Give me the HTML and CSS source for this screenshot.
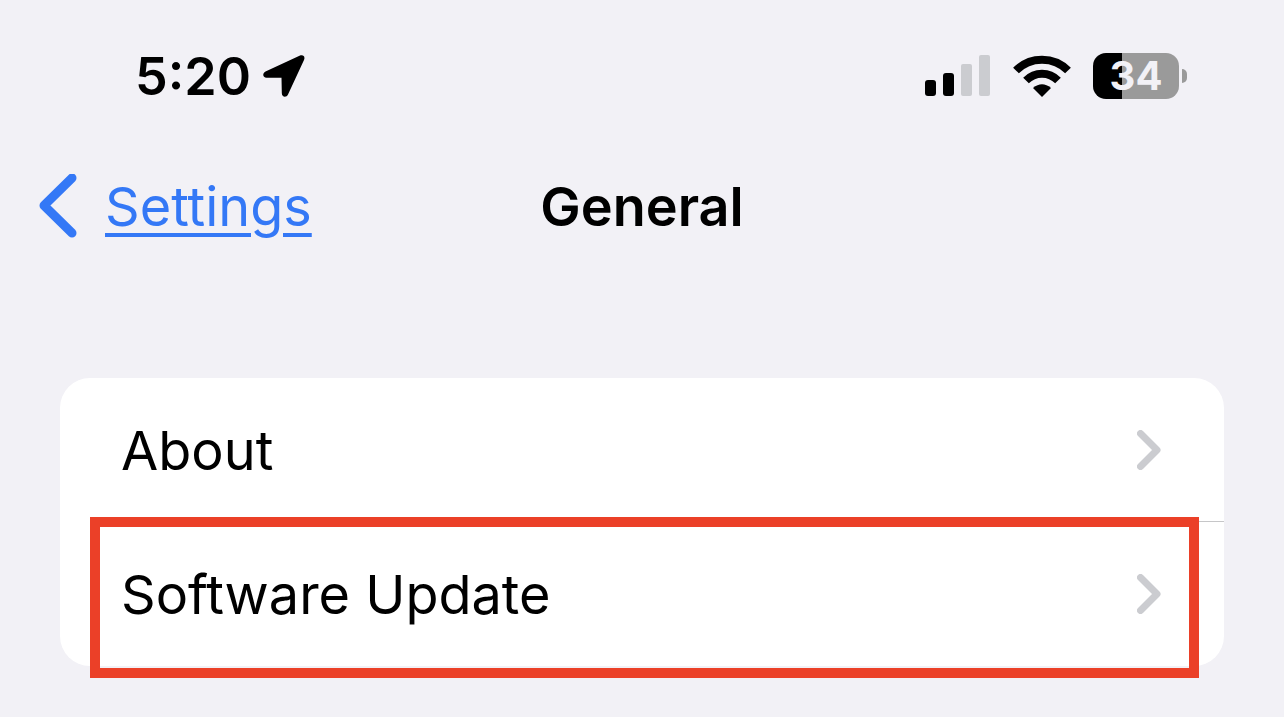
FILE: index.html
```html
<!DOCTYPE html>
<html lang="en">
<head>
    <meta charset="UTF-8">
    <meta name="viewport" content="width=device-width, initial-scale=1.0">
    <title>General</title>
    <link rel="stylesheet" href="styles.css">
</head>
<body>
    <div class="status-bar">
        <div class="status-left">
            <span class="time">5:20</span>
            <svg class="location" viewBox="0 0 42 42" aria-hidden="true">
                <path d="M36.500 0.800 L2.500 16.500 C-1 18.300 -0.200 22.800 3.500 22.800 L18.500 22.800 L18.800 38 C18.800 42.500 23.500 42.800 25 39.500 L41 5 C42.500 1.500 40 -0.800 36.500 0.800 Z"/>
            </svg>
        </div>
        <div class="status-right">
            <svg class="signal" viewBox="0 0 66 42" aria-hidden="true">
                <rect x="0" y="25" width="11" height="16" rx="3"/>
                <rect x="18" y="18" width="11" height="23" rx="3"/>
                <rect class="dim" x="36" y="9" width="11" height="32" rx="2"/>
                <rect class="dim" x="54" y="0" width="11" height="41" rx="2"/>
            </svg>
            <svg class="wifi" viewBox="0 0 58 42" aria-hidden="true">
                <path class="arc" d="M3 15.500 C17 1 41 1 55 15.500"/>
                <path class="arc" d="M13 25.500 C22 16.500 36 16.500 45 25.500"/>
                <path d="M29 42 L20 33 Q29 25.500 38 33 Z"/>
            </svg>
            <div class="battery">
                <span class="battery-level">34</span>
                <span class="battery-cap"></span>
            </div>
        </div>
    </div>

    <header class="nav-bar">
        <a href="#" class="back">
            <svg class="back-icon" viewBox="0 0 38 64" aria-hidden="true">
                <path d="M33 4 L5 31.500 L33 59"/>
            </svg>
            <span class="back-label">Settings</span>
        </a>
        <h1>General</h1>
    </header>

    <main class="list">
        <a href="#" class="row">
            <span>About</span>
            <svg class="chevron" viewBox="0 0 24 40" aria-hidden="true"><path d="M3.500 3.500 L20 20 L3.500 36.500"/></svg>
        </a>
        <a href="#" class="row">
            <span>Software Update</span>
            <svg class="chevron" viewBox="0 0 24 40" aria-hidden="true"><path d="M3.500 3.500 L20 20 L3.500 36.500"/></svg>
        </a>
        <div class="highlight"></div>
    </main>
</body>
</html>
```

FILE: styles.css
```css
* {
    box-sizing: border-box;
}
body {
    margin: 0;
    padding-bottom: 51px;
    font-family: Inter, "Liberation Sans", sans-serif;
    font-size: 54px;
    color: #000;
    background-color: #f2f1f6;
}
.status-bar {
    display: flex;
    justify-content: space-between;
    align-items: center;
    height: 152px;
    padding: 0 97px 0 135px;
}
.status-left, .status-right {
    display: flex;
    align-items: center;
}
.status-left {
    gap: 12px;
}
.status-right {
    gap: 22px;
}
.time {
    font-size: 52px;
    font-weight: 600;
}
.location {
    width: 42px;
    height: 42px;
}
.signal {
    width: 66px;
    height: 42px;
}
.signal .dim {
    fill: #cbccd0;
}
.wifi {
    width: 58px;
    height: 42px;
}
.wifi .arc {
    fill: none;
    stroke: #000;
    stroke-width: 8px;
}
.battery {
    display: flex;
    align-items: center;
    gap: 3px;
}
.battery-level {
    width: 86px;
    height: 46px;
    border-radius: 13px;
    background: linear-gradient(to right, #000 34%, #9a9a9a 34%);
    color: #f2f1f6;
    font-size: 40px;
    font-weight: 700;
    line-height: 45px;
    text-align: center;
}
.battery-cap {
    width: 5px;
    height: 14px;
    border-radius: 0 5px 5px 0;
    background-color: #9a9a9a;
}
.nav-bar {
    display: grid;
    grid-template-columns: 1fr auto 1fr;
    align-items: center;
    height: 108px;
    padding: 0 39px;
}
.nav-bar h1 {
    margin: 0;
    font-size: 54px;
    font-weight: 600;
}
.back {
    display: flex;
    align-items: center;
    gap: 28px;
    color: #3478f6;
    text-decoration: none;
}
.back-icon {
    width: 38px;
    height: 64px;
    fill: none;
    stroke: #3478f6;
    stroke-width: 9px;
    stroke-linecap: round;
    stroke-linejoin: round;
}
.back-label {
    text-decoration: underline;
    text-decoration-thickness: 4px;
    text-underline-offset: 7px;
}
.list {
    position: relative;
    margin: 118px 60px 0;
    border-radius: 30px;
    background-color: #fff;
}
.row {
    display: flex;
    justify-content: space-between;
    align-items: center;
    height: 144px;
    padding: 0 63px 0 61px;
    color: #000;
    text-decoration: none;
}
/* inset separator between rows */
.row:first-child {
    background: linear-gradient(#c6c6c8, #c6c6c8) 61px 100% / 100% 1px no-repeat;
}
.chevron {
    width: 24px;
    height: 40px;
    fill: none;
    stroke: #cbccd0;
    stroke-width: 7px;
    stroke-linecap: round;
    stroke-linejoin: round;
}
/* red frame drawn over the second row */
.highlight {
    position: absolute;
    top: 139px;
    right: 25px;
    bottom: -12px;
    left: 30px;
    border: 10px solid #eb4028;
    pointer-events: none;
}
```
